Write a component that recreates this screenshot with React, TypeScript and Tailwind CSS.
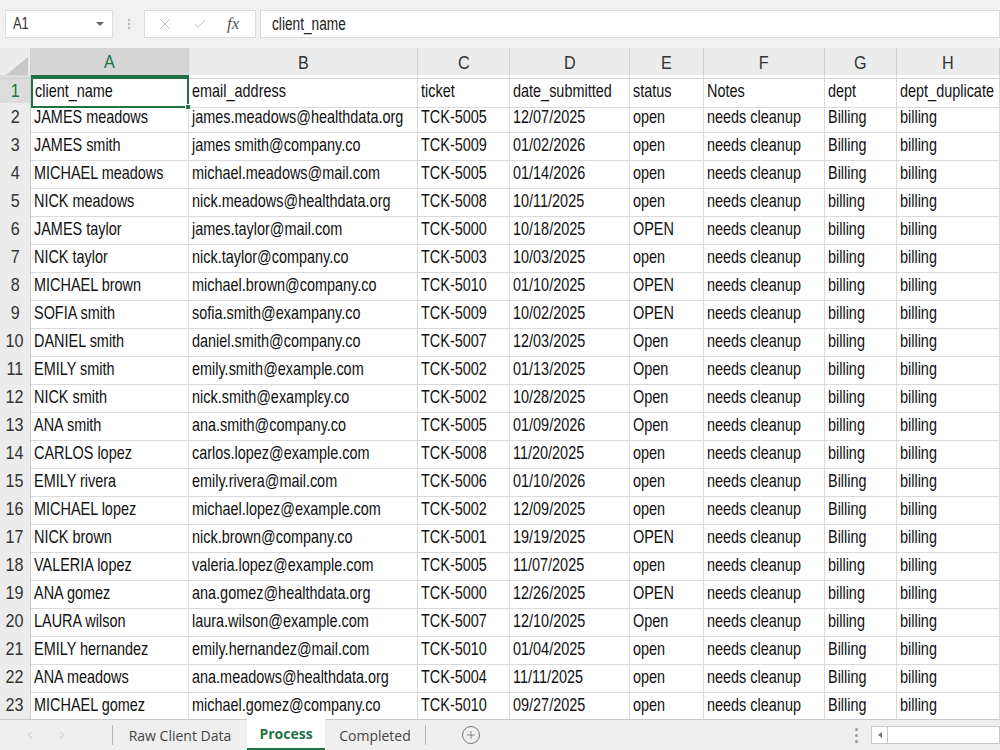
import { ChevronLeft, ChevronRight, Plus, X, Check } from "lucide-react";

const rows: string[][] = [
  ["client_name", "email_address", "ticket", "date_submitted", "status", "Notes", "dept", "dept_duplicate"],
  ["JAMES meadows", "james.meadows@healthdata.org", "TCK-5005", "12/07/2025", "open", "needs cleanup", "Billing", "billing"],
  ["JAMES smith", "james smith@company.co", "TCK-5009", "01/02/2026", "open", "needs cleanup", "Billing", "billing"],
  ["MICHAEL meadows", "michael.meadows@mail.com", "TCK-5005", "01/14/2026", "open", "needs cleanup", "Billing", "billing"],
  ["NICK meadows", "nick.meadows@healthdata.org", "TCK-5008", "10/11/2025", "open", "needs cleanup", "billing", "billing"],
  ["JAMES taylor", "james.taylor@mail.com", "TCK-5000", "10/18/2025", "OPEN", "needs cleanup", "billing", "billing"],
  ["NICK taylor", "nick.taylor@company.co", "TCK-5003", "10/03/2025", "open", "needs cleanup", "billing", "billing"],
  ["MICHAEL brown", "michael.brown@company.co", "TCK-5010", "01/10/2025", "OPEN", "needs cleanup", "billing", "billing"],
  ["SOFIA smith", "sofia.smith@exampany.co", "TCK-5009", "10/02/2025", "OPEN", "needs cleanup", "billing", "billing"],
  ["DANIEL smith", "daniel.smith@company.co", "TCK-5007", "12/03/2025", "Open", "needs cleanup", "billing", "billing"],
  ["EMILY smith", "emily.smith@example.com", "TCK-5002", "01/13/2025", "Open", "needs cleanup", "billing", "billing"],
  ["NICK smith", "nick.smith@examplεy.co", "TCK-5002", "10/28/2025", "Open", "needs cleanup", "billing", "billing"],
  ["ANA smith", "ana.smith@company.co", "TCK-5005", "01/09/2026", "Open", "needs cleanup", "billing", "billing"],
  ["CARLOS lopez", "carlos.lopez@example.com", "TCK-5008", "11/20/2025", "open", "needs cleanup", "billing", "billing"],
  ["EMILY rivera", "emily.rivera@mail.com", "TCK-5006", "01/10/2026", "open", "needs cleanup", "Billing", "billing"],
  ["MICHAEL lopez", "michael.lopez@example.com", "TCK-5002", "12/09/2025", "open", "needs cleanup", "Billing", "billing"],
  ["NICK brown", "nick.brown@company.co", "TCK-5001", "19/19/2025", "OPEN", "needs cleanup", "Billing", "billing"],
  ["VALERIA lopez", "valeria.lopez@example.com", "TCK-5005", "11/07/2025", "open", "needs cleanup", "billing", "billing"],
  ["ANA gomez", "ana.gomez@healthdata.org", "TCK-5000", "12/26/2025", "OPEN", "needs cleanup", "billing", "billing"],
  ["LAURA wilson", "laura.wilson@example.com", "TCK-5007", "12/10/2025", "Open", "needs cleanup", "billing", "billing"],
  ["EMILY hernandez", "emily.hernandez@mail.com", "TCK-5010", "01/04/2025", "open", "needs cleanup", "Billing", "billing"],
  ["ANA meadows", "ana.meadows@healthdata.org", "TCK-5004", "11/11/2025", "open", "needs cleanup", "Billing", "billing"],
  ["MICHAEL gomez", "michael.gomez@company.co", "TCK-5010", "09/27/2025", "open", "needs cleanup", "Billing", "billing"],
];

const cols = ["A", "B", "C", "D", "E", "F", "G", "H"];
const gridCols = "grid grid-cols-[31px_158px_229px_92px_120px_74px_121px_72px_103px]";

// Calibri-like condensed look: Arial metrics squeezed horizontally
function Narrow({ children }: { children: React.ReactNode }) {
  return <span className="inline-block origin-left scale-x-[0.76] whitespace-nowrap">{children}</span>;
}

export default function App() {
  return (
    <div
      className="w-[1000px] h-[750px] overflow-hidden flex flex-col bg-white text-[#111]"
      style={{ fontFamily: '"Liberation Sans", Arial, sans-serif' }}
    >
      {/* Formula bar */}
      <div className="h-[48px] shrink-0 bg-[#f1f1f1] flex items-center pl-[5px]">
        <div className="w-[108px] h-[28px] bg-white border border-[#dcdcdc] flex items-center justify-between pl-[7px] pr-[8px]">
          <span className="text-[17px] text-[#333]">
            <Narrow>A1</Narrow>
          </span>
          <span className="w-0 h-0 border-l-[4px] border-r-[4px] border-t-[4px] border-l-transparent border-r-transparent border-t-[#666]" />
        </div>
        <div className="w-[31px] flex flex-col items-center gap-[2px]">
          <span className="w-[2px] h-[2px] rounded-full bg-[#aaa]" />
          <span className="w-[2px] h-[2px] rounded-full bg-[#aaa]" />
          <span className="w-[2px] h-[2px] rounded-full bg-[#aaa]" />
        </div>
        <div className="w-[112px] h-[28px] bg-white border border-[#dcdcdc] flex items-center pl-[12px] gap-[19px]">
          <X className="w-[16px] h-[16px] text-[#b8b8b8]" strokeWidth={1.4} />
          <Check className="w-[16px] h-[16px] text-[#b8b8b8]" strokeWidth={1.4} />
          <span className="italic text-[17px] text-[#555]" style={{ fontFamily: '"Liberation Serif", serif' }}>
            fx
          </span>
        </div>
        <div className="ml-[4px] flex-1 h-[28px] bg-white border border-[#dcdcdc] flex items-center pl-[11px]">
          <span className="text-[18px] text-[#222]">
            <Narrow>client_name</Narrow>
          </span>
        </div>
      </div>

      {/* Column headers */}
      <div className={`${gridCols} h-[27px] shrink-0 bg-[#ececec]`}>
        <div className="relative border-r border-b border-[#cfcfcf] overflow-hidden">
          <svg className="absolute right-[2px] bottom-[3px]" width="22" height="18" viewBox="0 0 22 18">
            <polygon points="22,0 22,18 0,18" fill="#c8c8c8" />
          </svg>
        </div>
        {cols.map((c, i) => (
          <div
            key={c}
            className={
              i === 0
                ? "bg-[#d6d6d6] border-r border-[#cfcfcf] border-b-2 border-b-[#217346] flex items-center justify-center text-[19px] text-[#217346]"
                : "border-r border-b border-[#cfcfcf] flex items-center justify-center text-[19px] text-[#333]"
            }
          >
            <span className="inline-block scale-x-[0.85]">{c}</span>
          </div>
        ))}
      </div>

      {/* Rows */}
      <div className="flex-1 overflow-hidden">
        {rows.map((r, ri) => (
          <div key={ri} className={`${gridCols} h-[28px]`}>
            <div
              className={`border-r border-b border-[#cfcfcf] flex items-center justify-center text-[19px] ${
                ri === 0 ? "text-[#217346] bg-[#dcdcdc]" : "text-[#333] bg-[#ececec]"
              }`}
            >
              <span className="inline-block scale-x-[0.85]">{ri + 1}</span>
            </div>
            {r.map((cell, ci) => (
              <div
                key={ci}
                className={
                  ri === 0 && ci === 0
                    ? "relative border-2 border-[#217346] flex items-center pl-[2px] text-[19px]"
                    : "border-r border-b border-[#dadada] flex items-center pl-[3px] text-[19px] overflow-hidden"
                }
              >
                <Narrow>{cell}</Narrow>
                {ri === 0 && ci === 0 && (
                  <span className="absolute -right-[4px] -bottom-[4px] w-[6px] h-[6px] bg-[#217346] border border-white" />
                )}
              </div>
            ))}
          </div>
        ))}
      </div>

      {/* Sheet tabs */}
      <div
        className="h-[31px] shrink-0 bg-[#efefef] border-t border-[#c8c8c8] flex items-stretch"
        style={{ fontFamily: '"Open Sans", "Liberation Sans", sans-serif' }}
      >
        <div className="w-[112px] flex items-center pl-[24px] gap-[20px] text-[#c4c4c4]">
          <ChevronLeft className="w-[12px] h-[12px]" strokeWidth={2} />
          <ChevronRight className="w-[12px] h-[12px]" strokeWidth={2} />
        </div>
        <div className="w-px my-[5px] bg-[#b5b5b5]" />
        <div className="w-[134px] flex items-center justify-center text-[14px] text-[#444]">Raw Client Data</div>
        <div className="w-[78px] bg-white border-b-2 border-[#217346] flex items-center justify-center text-[14px] font-bold text-[#217346] -mt-px">
          Process
        </div>
        <div className="w-[100px] flex items-center justify-center text-[14px] text-[#444]">Completed</div>
        <div className="w-px my-[5px] bg-[#b5b5b5]" />
        <div className="w-[90px] flex items-center justify-center">
          <div className="w-[18px] h-[18px] rounded-full border border-[#777] flex items-center justify-center">
            <Plus className="w-[12px] h-[12px] text-[#666]" strokeWidth={1.5} />
          </div>
        </div>
        <div className="flex-1" />
        <div className="w-[30px] flex flex-col items-center justify-center gap-[3px]">
          <span className="w-[3px] h-[3px] rounded-full bg-[#9a9a9a]" />
          <span className="w-[3px] h-[3px] rounded-full bg-[#9a9a9a]" />
          <span className="w-[3px] h-[3px] rounded-full bg-[#9a9a9a]" />
        </div>
        <div className="w-[129px] my-[6px] bg-white border border-[#c8c8c8] flex items-stretch">
          <div className="w-[16px] border-r border-[#c8c8c8] flex items-center justify-center">
            <span className="w-0 h-0 border-t-[3px] border-b-[3px] border-r-[4px] border-t-transparent border-b-transparent border-r-[#777]" />
          </div>
        </div>
      </div>
    </div>
  );
}
